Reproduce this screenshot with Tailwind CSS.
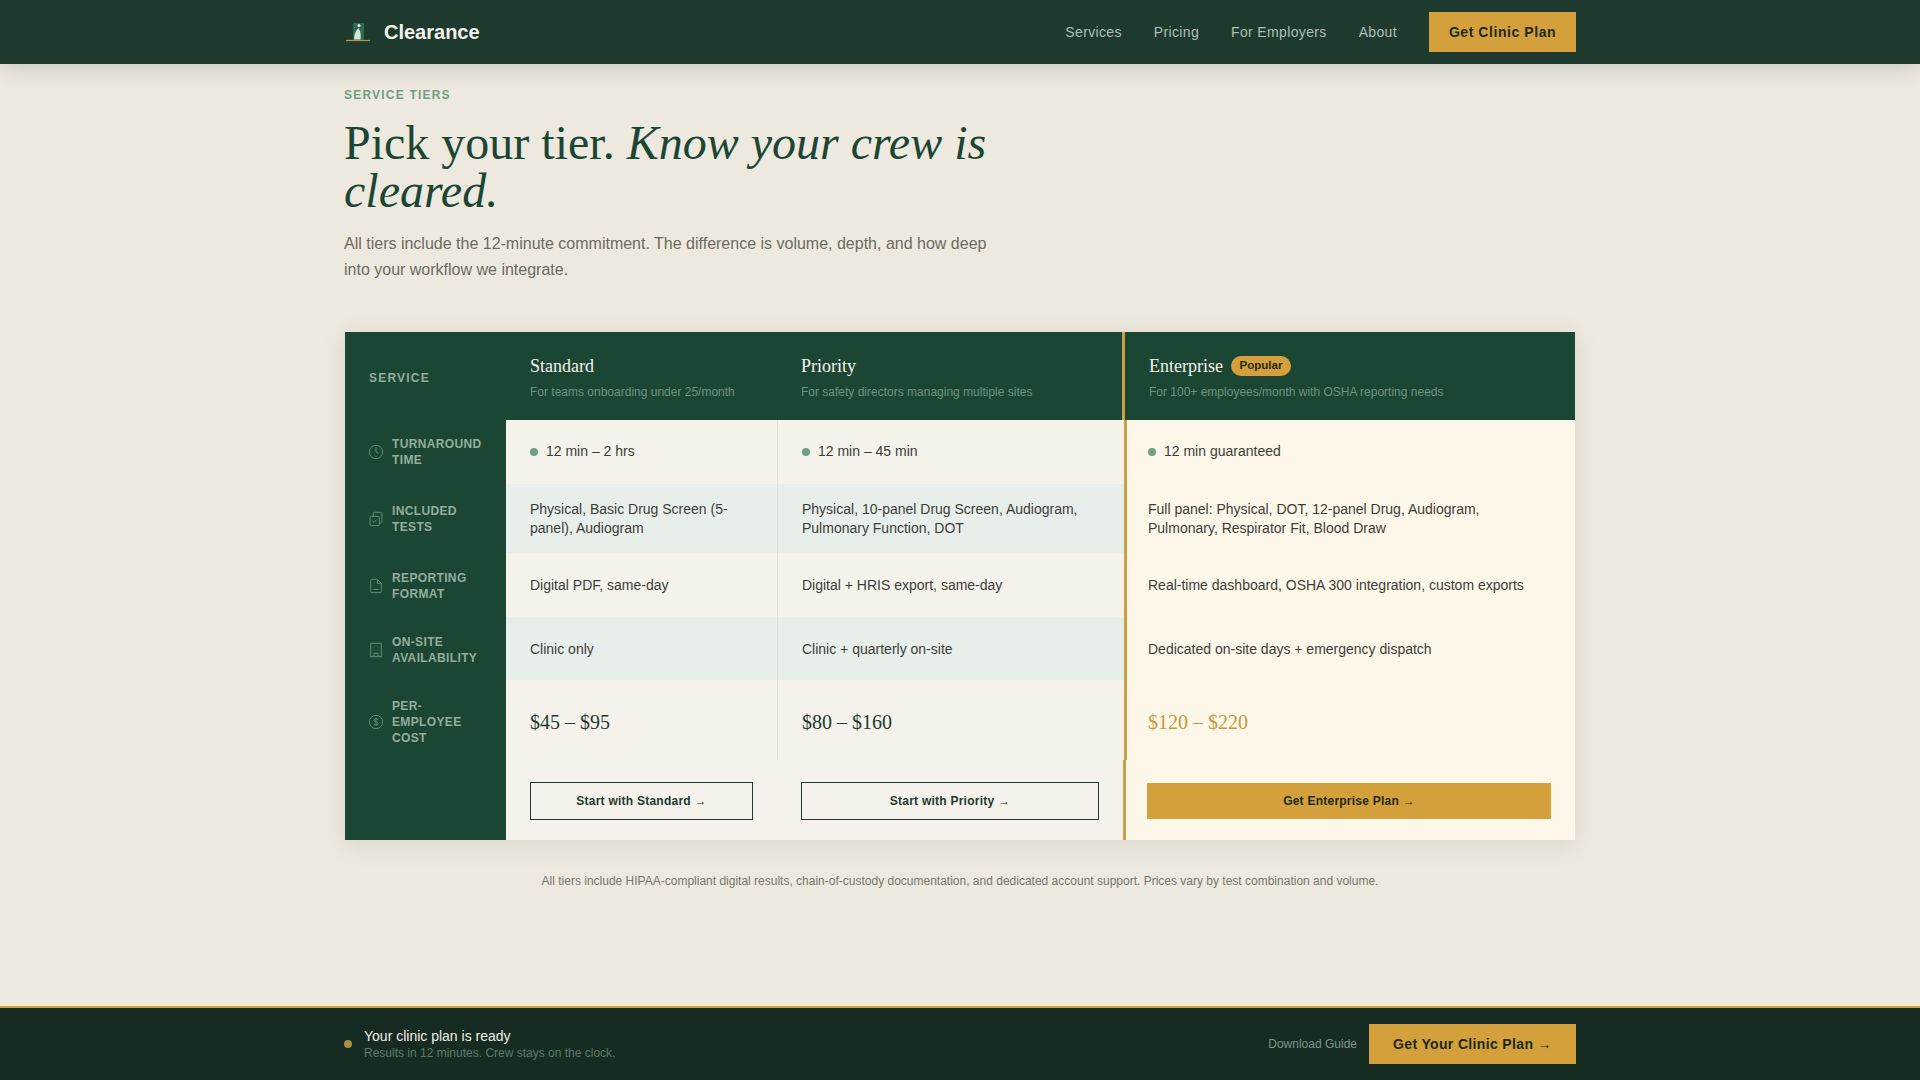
<!DOCTYPE html>
<html lang="en">
<head>
  <meta charset="UTF-8" />
  <meta name="viewport" content="width=device-width, initial-scale=1.0"/>
  <title>Clearance - Service Tiers</title>
  <script src="https://cdn.jsdelivr.net/npm/@tailwindcss/browser@4"></script>
</head>
<body class="bg-[#eee9df] h-screen overflow-hidden flex flex-col font-['Liberation_Sans',Arial,sans-serif]">

  <!-- nav -->
  <header class="h-16 shrink-0 bg-[#1e3a2f] shadow-[0_4px_20px_rgba(30,58,47,0.18)] relative">
    <div class="w-[1232px] mx-auto h-full flex items-center justify-between">
      <div class="flex items-center gap-3">
        <svg class="w-7 h-7" viewBox="0 0 28 28" fill="none">
          <rect x="9" y="5" width="11" height="17" fill="#2f6a4f"/>
          <circle cx="15" cy="7.500" r="1.500" fill="#e8f0e8"/>
          <path d="M14.500 10c-2.500 2.500-4.500 6-4.500 11.500h6.500c.5-3.500.5-7.500-2-11.500z" fill="#d5e6d8"/>
          <path d="M2 22.500h24" stroke="#b59a4a" stroke-width="1.200"/>
        </svg>
        <span class="text-[20px] font-bold text-[#f5f2ec]">Clearance</span>
      </div>
      <nav class="flex items-center gap-8 text-sm tracking-[0.025em] text-[#aebfb3]">
        <a href="#">Services</a>
        <a href="#">Pricing</a>
        <a href="#">For Employers</a>
        <a href="#">About</a>
        <a href="#" class="w-[147px] h-10 flex items-center justify-center bg-[#d4a03c] text-[#1e2a14] font-bold tracking-[0.04em]">Get Clinic Plan</a>
      </nav>
    </div>
  </header>

  <main class="w-[1232px] mx-auto flex-1">
    <p class="mt-[23px] text-xs font-bold tracking-[0.1em] uppercase text-[#6f9f80] leading-4">Service Tiers</p>
    <h1 class="mt-4 max-w-[720px] font-['Liberation_Serif',serif] text-[48px] leading-[48px] text-[#1c4634]">Pick your tier. <em>Know your crew is cleared.</em></h1>
    <p class="mt-4 max-w-[660px] text-base leading-[26px] text-[#6b6b60]">All tiers include the 12-minute commitment. The difference is volume, depth, and how deep into your workflow we integrate.</p>

    <!-- tier table -->
    <div class="mt-[49px] mx-px shadow-[0_4px_24px_rgba(30,58,47,0.1)]">
      <div class="grid grid-cols-[161px_272px_344px_1fr] h-[88px] bg-[#1c4634]">
        <div class="pl-6 pt-[3px] flex items-center text-xs font-bold tracking-[0.1em] uppercase text-[#92ae9c]">Service</div>
        <div class="pl-6 pt-5">
          <div class="font-['Liberation_Serif',serif] text-lg h-7 flex items-center text-[#f5f2ec]">Standard</div>
          <div class="mt-[3px] text-xs leading-[18px] text-[#6d9480]">For teams onboarding under 25/month</div>
        </div>
        <div class="pl-[23px] pt-5">
          <div class="font-['Liberation_Serif',serif] text-lg h-7 flex items-center text-[#f5f2ec]">Priority</div>
          <div class="mt-[3px] text-xs leading-[18px] text-[#6d9480]">For safety directors managing multiple sites</div>
        </div>
        <div class="pl-6 pt-5 border-l-3 border-[#c9a045]">
          <div class="font-['Liberation_Serif',serif] text-lg h-7 flex items-center gap-2 text-[#f5f2ec]">Enterprise <span class="w-[60px] h-5 rounded-full bg-[#d4a03c] flex items-center justify-center font-['Liberation_Sans',sans-serif] text-[11.5px] font-bold text-[#1e2a14]">Popular</span></div>
          <div class="mt-[3px] text-xs leading-[18px] text-[#6d9480]">For 100+ employees/month with OSHA reporting needs</div>
        </div>
      </div>

      <div class="grid grid-cols-[161px_272px_346px_1fr] h-16 text-sm text-[#3d3d38]">
        <div class="bg-[#1c4634] pl-[23px] pr-4 flex items-center gap-2 text-xs leading-4 font-bold tracking-[0.03em] uppercase text-[#92ae9c]">
          <svg class="w-4 h-4 shrink-0 text-[#5f8a72]" viewBox="0 0 24 24" fill="none" stroke="currentColor" stroke-width="1.500"><circle cx="12" cy="12" r="10"/><path d="M12 6v6l4 2"/></svg>
          Turnaround Time
        </div>
        <div class="bg-[#f5f2ec] border-r border-[#e3e2da] pl-6 pb-0.5 flex items-center gap-2"><span class="w-2 h-2 mt-0.5 rounded-full bg-[#6f9f80]"></span>12 min – 2 hrs</div>
        <div class="bg-[#f5f2ec] pl-6 pb-0.5 flex items-center gap-2"><span class="w-2 h-2 mt-0.5 rounded-full bg-[#6f9f80]"></span>12 min – 45 min</div>
        <div class="bg-[#fdf7e9] border-l-3 border-[#c9a045] pl-[21px] pb-0.5 flex items-center gap-2"><span class="w-2 h-2 mt-0.5 rounded-full bg-[#6f9f80]"></span>12 min guaranteed</div>
      </div>

      <div class="grid grid-cols-[161px_272px_346px_1fr] h-[69px] text-sm leading-[19px] text-[#3d3d38]">
        <div class="bg-[#1c4634] pl-[23px] pr-4 flex items-center gap-2 text-xs leading-4 font-bold tracking-[0.03em] uppercase text-[#92ae9c]">
          <svg class="w-4 h-4 shrink-0 text-[#5f8a72]" viewBox="0 0 24 24" fill="none" stroke="currentColor" stroke-width="1.500"><rect x="3" y="8" width="14" height="14" rx="2"/><path d="M8 8V4a2 2 0 0 1 2-2h9a2 2 0 0 1 2 2v12a2 2 0 0 1-2 2h-2"/><path d="M7 15l2 2 4-4"/></svg>
          Included Tests
        </div>
        <div class="bg-[#e8efea] border-r border-[#e3e2da] pl-6 pr-6 flex items-center">Physical, Basic Drug Screen (5-panel), Audiogram</div>
        <div class="bg-[#e8efea] pl-6 pr-6 flex items-center">Physical, 10-panel Drug Screen, Audiogram, Pulmonary Function, DOT</div>
        <div class="bg-[#fdf7e9] border-l-3 border-[#c9a045] pl-[21px] pr-6 flex items-center">Full panel: Physical, DOT, 12-panel Drug, Audiogram, Pulmonary, Respirator Fit, Blood Draw</div>
      </div>

      <div class="grid grid-cols-[161px_272px_346px_1fr] h-16 text-sm text-[#3d3d38]">
        <div class="bg-[#1c4634] pl-[23px] pr-4 pt-0.5 flex items-center gap-2 text-xs leading-4 font-bold tracking-[0.03em] uppercase text-[#92ae9c]">
          <svg class="w-4 h-4 shrink-0 text-[#5f8a72]" viewBox="0 0 24 24" fill="none" stroke="currentColor" stroke-width="1.500"><path d="M14 2H6a2 2 0 0 0-2 2v16a2 2 0 0 0 2 2h12a2 2 0 0 0 2-2V8z"/><path d="M14 2v6h6"/><path d="M8 17h8"/></svg>
          Reporting Format
        </div>
        <div class="bg-[#f5f2ec] border-r border-[#e3e2da] pl-6 flex items-center">Digital PDF, same-day</div>
        <div class="bg-[#f5f2ec] pl-6 flex items-center">Digital + HRIS export, same-day</div>
        <div class="bg-[#fdf7e9] border-l-3 border-[#c9a045] pl-[21px] flex items-center">Real-time dashboard, OSHA 300 integration, custom exports</div>
      </div>

      <div class="grid grid-cols-[161px_272px_346px_1fr] h-[63px] text-sm text-[#3d3d38]">
        <div class="bg-[#1c4634] pl-[23px] pr-4 pt-0.5 flex items-center gap-2 text-xs leading-4 font-bold tracking-[0.03em] uppercase text-[#92ae9c]">
          <svg class="w-4 h-4 shrink-0 text-[#5f8a72]" viewBox="0 0 24 24" fill="none" stroke="currentColor" stroke-width="1.500"><rect x="4" y="2" width="16" height="20"/><path d="M9 22v-5h6v5M9 7h1M14 7h1M9 12h1M14 12h1"/></svg>
          On-Site Availability
        </div>
        <div class="bg-[#e8efea] border-r border-[#e3e2da] pl-6 flex items-center">Clinic only</div>
        <div class="bg-[#e8efea] pl-6 flex items-center">Clinic + quarterly on-site</div>
        <div class="bg-[#fdf7e9] border-l-3 border-[#c9a045] pl-[21px] flex items-center">Dedicated on-site days + emergency dispatch</div>
      </div>

      <div class="grid grid-cols-[161px_272px_346px_1fr] h-20 font-['Liberation_Serif',serif] text-xl text-[#1e3a2f]">
        <div class="bg-[#1c4634] pl-[23px] pr-4 pt-1 flex items-center gap-2 font-['Liberation_Sans',sans-serif] text-xs leading-4 font-bold tracking-[0.03em] uppercase text-[#92ae9c]">
          <svg class="w-4 h-4 shrink-0 text-[#5f8a72]" viewBox="0 0 24 24" fill="none" stroke="currentColor" stroke-width="1.500"><circle cx="12" cy="12" r="10"/><path d="M12 6v12M15 9a3 2 0 0 0-3-1.500 2.500 2 0 0 0 0 4.500 2.500 2 0 0 1 0 4.500A3 2 0 0 1 9 15"/></svg>
          <span class="w-[70px]">Per-Employee Cost</span>
        </div>
        <div class="bg-[#f5f2ec] border-r border-[#e3e2da] pl-6 pt-1 flex items-center">$45 – $95</div>
        <div class="bg-[#f5f2ec] pl-6 pt-1 flex items-center">$80 – $160</div>
        <div class="bg-[#fdf7e9] border-l-3 border-[#c9a045] pl-[21px] pt-1 flex items-center text-[#c49a3c]">$120 – $220</div>
      </div>

      <div class="grid grid-cols-[161px_272px_345px_1fr] h-20 text-xs font-bold tracking-[0.02em]">
        <div class="bg-[#1c4634]"></div>
        <div class="bg-[#f5f2ec] pl-6 pr-[25px] pt-[22px]">
          <a href="#" class="h-[38px] flex items-center justify-center border border-[#1e3a2f] text-[#1e3a2f]">Start with Standard →</a>
        </div>
        <div class="bg-[#f5f2ec] pl-[23px] pr-6 pt-[22px]">
          <a href="#" class="h-[38px] flex items-center justify-center border border-[#1e3a2f] text-[#1e3a2f]">Start with Priority →</a>
        </div>
        <div class="bg-[#fdf7e9] border-l-3 border-[#c9a045] pl-[21px] pr-6 pt-[23px]">
          <a href="#" class="h-9 flex items-center justify-center bg-[#d4a03c] text-[#1e2a14]">Get Enterprise Plan →</a>
        </div>
      </div>
    </div>

    <p class="mt-[33px] text-center text-xs leading-4 text-[#77776b]">All tiers include HIPAA-compliant digital results, chain-of-custody documentation, and dedicated account support. Prices vary by test combination and volume.</p>
  </main>

  <!-- sticky bottom bar -->
  <div class="h-[74px] shrink-0 bg-[#162b22] border-t-2 border-[#d4a03c]">
    <div class="w-[1232px] h-full mx-auto flex items-center justify-between">
      <div class="flex items-center gap-3">
        <span class="w-2 h-2 rounded-full bg-[#a8903f]"></span>
        <div>
          <div class="text-sm leading-[18px] text-[#f0ede5]">Your clinic plan is ready</div>
          <div class="text-xs leading-4 text-[#5f7a6c]">Results in 12 minutes. Crew stays on the clock.</div>
        </div>
      </div>
      <div class="flex items-center gap-3">
        <a href="#" class="text-xs text-[#7f9688]">Download Guide</a>
        <a href="#" class="w-[207px] h-10 flex items-center justify-center bg-[#d4a03c] text-[#1e2a14] text-sm font-bold tracking-[0.025em]">Get Your Clinic Plan →</a>
      </div>
    </div>
  </div>
</body>
</html>
